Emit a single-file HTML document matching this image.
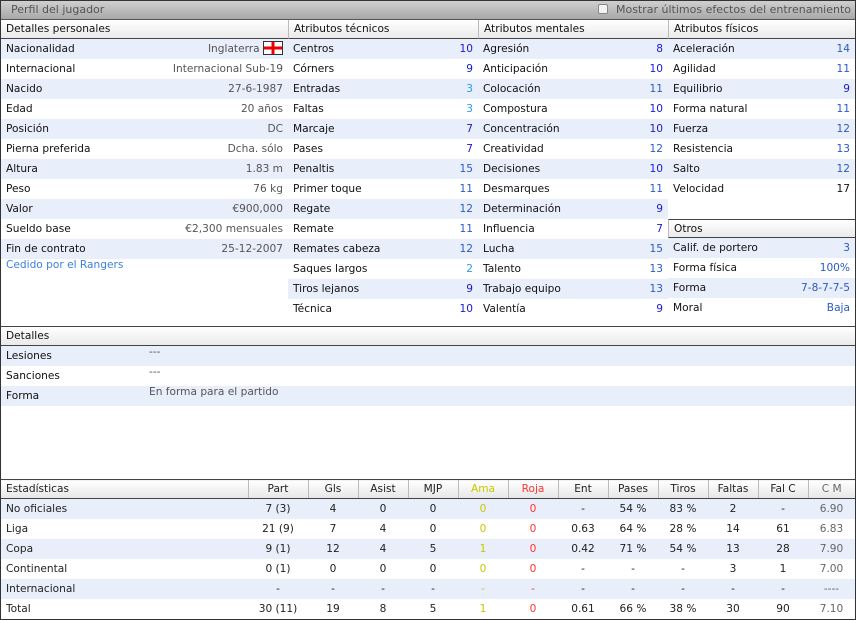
<!DOCTYPE html>
<html><head><meta charset="utf-8"><style>
*{box-sizing:border-box;margin:0;padding:0}
body{width:856px;height:620px;background:#fff;font-family:"DejaVu Sans","Liberation Sans",sans-serif;font-size:10.6px;color:#111;position:relative;overflow:hidden}
#frame{position:absolute;left:0;top:0;width:856px;height:620px;border:1px solid #333}
.title{position:absolute;left:1px;top:1px;width:854px;height:19px;background:linear-gradient(#cfcfcf,#a8a8a8);border-bottom:1px solid #555;color:#555;font-size:11px;line-height:18px;padding-left:10px}
.title .r{position:absolute;right:4px;top:0}
.title .cb{display:inline-block;width:10px;height:10px;border:1px solid #888;border-radius:2px;background:#f4f4f4;vertical-align:-1px;margin-right:8px}
.col{position:absolute;top:20px}
.hd{height:19px;line-height:19px;padding-left:5px;background:linear-gradient(#fff,#eaeaea);border-bottom:1px solid #444;border-left:1px solid #bbb}
.row{height:20px;line-height:20px;padding:0 5px;display:flex;justify-content:space-between;white-space:nowrap}
.row:nth-child(even){background:#e8eefa}
.v{color:#555}
.b1{color:#1a1ad0}.b2{color:#2a5ac8}.b3{color:#2a9af0}
.sec{position:absolute;left:1px;width:854px}
table{border-collapse:collapse;width:854px;position:absolute;left:1px;top:479px}
td,th{height:20px;text-align:center;font-weight:normal;white-space:nowrap;color:#222}
th{background:linear-gradient(#fff,#e6e6e6);border-left:1px solid #bbb;border-bottom:1px solid #444;border-top:1px solid #444;height:19px}
th:first-child,td:first-child{text-align:left;padding-left:5px;border-left:none}
tr:nth-child(even) td{background:#e8eefa}
.y{color:#c8c800}.rd{color:#ff3333}.g{color:#666}
</style></head><body>
<div id="frame"></div>
<div class="title">Perfil del jugador<span class="r"><span class="cb"></span>Mostrar últimos efectos del entrenamiento</span></div>

<div class="col" style="left:1px;width:287px">
<div class="hd" style="border-left:none">Detalles personales</div>
<div>
<div class="row" style="display:none"></div>
<div class="row"><span>Nacionalidad</span><span class="v">Inglaterra <svg width="20" height="14" viewBox="0 0 20 14" style="vertical-align:-3px"><rect x="0.5" y="0.5" width="19" height="13" fill="#fff" stroke="#333"/><rect x="8.5" y="1" width="3" height="12" fill="#e00"/><rect x="1" y="5.5" width="18" height="3" fill="#e00"/></svg></span></div>
<div class="row"><span>Internacional</span><span class="v">Internacional Sub-19</span></div>
<div class="row"><span>Nacido</span><span class="v">27-6-1987</span></div>
<div class="row"><span>Edad</span><span class="v">20 años</span></div>
<div class="row"><span>Posición</span><span class="v">DC</span></div>
<div class="row"><span>Pierna preferida</span><span class="v">Dcha. sólo</span></div>
<div class="row"><span>Altura</span><span class="v">1.83 m</span></div>
<div class="row"><span>Peso</span><span class="v">76 kg</span></div>
<div class="row"><span>Valor</span><span class="v">€900,000</span></div>
<div class="row"><span>Sueldo base</span><span class="v">€2,300 mensuales</span></div>
<div class="row"><span>Fin de contrato</span><span class="v">25-12-2007</span></div>
<div class="row" style="line-height:12px;color:#3a80e0;background:#fff">Cedido por el Rangers</div>
</div></div>

<div class="col" style="left:288px;width:190px">
<div class="hd">Atributos técnicos</div>
<div>
<div class="row" style="display:none"></div>
<div class="row"><span>Centros</span><span class="b1">10</span></div>
<div class="row"><span>Córners</span><span class="b1">9</span></div>
<div class="row"><span>Entradas</span><span class="b3">3</span></div>
<div class="row"><span>Faltas</span><span class="b3">3</span></div>
<div class="row"><span>Marcaje</span><span class="b1">7</span></div>
<div class="row"><span>Pases</span><span class="b1">7</span></div>
<div class="row"><span>Penaltis</span><span class="b2">15</span></div>
<div class="row"><span>Primer toque</span><span class="b2">11</span></div>
<div class="row"><span>Regate</span><span class="b2">12</span></div>
<div class="row"><span>Remate</span><span class="b2">11</span></div>
<div class="row"><span>Remates cabeza</span><span class="b2">12</span></div>
<div class="row"><span>Saques largos</span><span class="b3">2</span></div>
<div class="row"><span>Tiros lejanos</span><span class="b1">9</span></div>
<div class="row"><span>Técnica</span><span class="b1">10</span></div>
</div></div>

<div class="col" style="left:478px;width:190px">
<div class="hd">Atributos mentales</div>
<div>
<div class="row" style="display:none"></div>
<div class="row"><span>Agresión</span><span class="b1">8</span></div>
<div class="row"><span>Anticipación</span><span class="b1">10</span></div>
<div class="row"><span>Colocación</span><span class="b2">11</span></div>
<div class="row"><span>Compostura</span><span class="b1">10</span></div>
<div class="row"><span>Concentración</span><span class="b1">10</span></div>
<div class="row"><span>Creatividad</span><span class="b2">12</span></div>
<div class="row"><span>Decisiones</span><span class="b1">10</span></div>
<div class="row"><span>Desmarques</span><span class="b2">11</span></div>
<div class="row"><span>Determinación</span><span class="b1">9</span></div>
<div class="row"><span>Influencia</span><span class="b1">7</span></div>
<div class="row"><span>Lucha</span><span class="b2">15</span></div>
<div class="row"><span>Talento</span><span class="b2">13</span></div>
<div class="row"><span>Trabajo equipo</span><span class="b2">13</span></div>
<div class="row"><span>Valentía</span><span class="b1">9</span></div>
</div></div>

<div class="col" style="left:668px;width:187px">
<div class="hd">Atributos físicos</div>
<div>
<div class="row" style="display:none"></div>
<div class="row"><span>Aceleración</span><span class="b2">14</span></div>
<div class="row"><span>Agilidad</span><span class="b2">11</span></div>
<div class="row"><span>Equilibrio</span><span class="b1">9</span></div>
<div class="row"><span>Forma natural</span><span class="b2">11</span></div>
<div class="row"><span>Fuerza</span><span class="b2">12</span></div>
<div class="row"><span>Resistencia</span><span class="b2">13</span></div>
<div class="row"><span>Salto</span><span class="b2">12</span></div>
<div class="row"><span>Velocidad</span><span>17</span></div>
</div>
<div class="hd" style="margin-top:20px;border-top:1px solid #444">Otros</div>
<div>
<div class="row" style="display:none"></div>
<div class="row"><span>Calif. de portero</span><span class="b2">3</span></div>
<div class="row"><span>Forma física</span><span class="b2">100%</span></div>
<div class="row"><span>Forma</span><span class="b2">7-8-7-7-5</span></div>
<div class="row"><span>Moral</span><span class="b2">Baja</span></div>
</div></div>

<div class="sec" style="top:326px;border-top:1px solid #444">
<div class="hd" style="border-left:none">Detalles</div>
<div>
<div class="row" style="display:none"></div>
<div class="row" style="justify-content:flex-start"><span style="width:143px">Lesiones</span><span class="v" style="line-height:12px">---</span></div>
<div class="row" style="justify-content:flex-start"><span style="width:143px">Sanciones</span><span class="v" style="line-height:12px">---</span></div>
<div class="row" style="justify-content:flex-start"><span style="width:143px">Forma</span><span class="v" style="line-height:12px">En forma para el partido</span></div>
</div></div>

<table>
<tr><th style="width:247px">Estadísticas</th><th style="width:60px">Part</th><th style="width:50px">Gls</th><th style="width:50px">Asist</th><th style="width:50px">MJP</th><th style="width:50px" class="y">Ama</th><th style="width:50px" class="rd">Roja</th><th style="width:50px">Ent</th><th style="width:50px">Pases</th><th style="width:50px">Tiros</th><th style="width:50px">Faltas</th><th style="width:50px">Fal C</th><th class="g">C M</th></tr>
<tr><td>No oficiales</td><td>7 (3)</td><td>4</td><td>0</td><td>0</td><td class="y">0</td><td class="rd">0</td><td>-</td><td>54 %</td><td>83 %</td><td>2</td><td>-</td><td class="g">6.90</td></tr>
<tr><td>Liga</td><td>21 (9)</td><td>7</td><td>4</td><td>0</td><td class="y">0</td><td class="rd">0</td><td>0.63</td><td>64 %</td><td>28 %</td><td>14</td><td>61</td><td class="g">6.83</td></tr>
<tr><td>Copa</td><td>9 (1)</td><td>12</td><td>4</td><td>5</td><td class="y">1</td><td class="rd">0</td><td>0.42</td><td>71 %</td><td>54 %</td><td>13</td><td>28</td><td class="g">7.90</td></tr>
<tr><td>Continental</td><td>0 (1)</td><td>0</td><td>0</td><td>0</td><td class="y">0</td><td class="rd">0</td><td>-</td><td>-</td><td>-</td><td>3</td><td>1</td><td class="g">7.00</td></tr>
<tr><td>Internacional</td><td>-</td><td>-</td><td>-</td><td>-</td><td class="y">-</td><td class="rd">-</td><td>-</td><td>-</td><td>-</td><td>-</td><td>-</td><td class="g">----</td></tr>
<tr><td>Total</td><td>30 (11)</td><td>19</td><td>8</td><td>5</td><td class="y">1</td><td class="rd">0</td><td>0.61</td><td>66 %</td><td>38 %</td><td>30</td><td>90</td><td class="g">7.10</td></tr>
</table>
</body></html>
